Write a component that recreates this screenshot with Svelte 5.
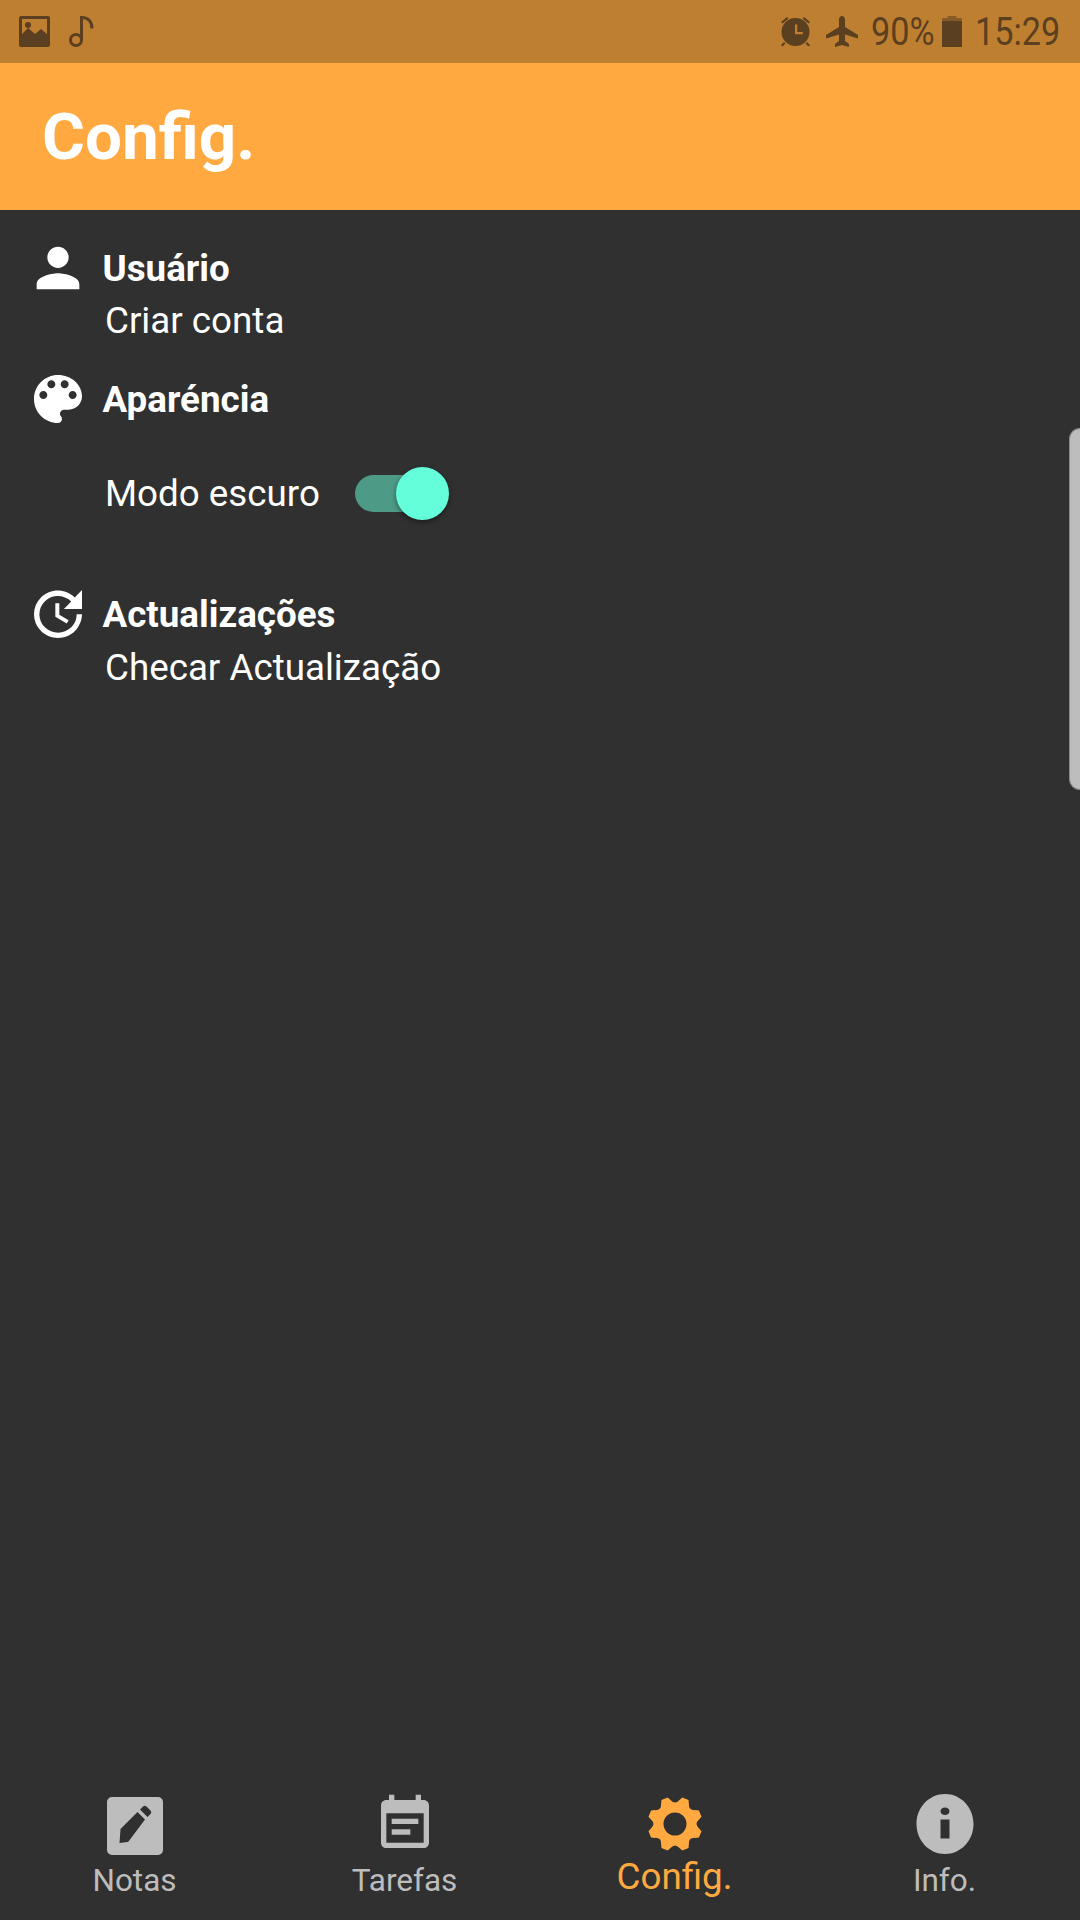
<script>
	// 8-toothed cog, outline computed so the scallops stay even
	function gearPath(cx, cy, outer, inner, hole) {
		let d = '';
		const pt = (r, deg) => {
			const a = (deg * Math.PI) / 180;
			return `${(cx + r * Math.cos(a)).toFixed(2)} ${(cy + r * Math.sin(a)).toFixed(2)}`;
		};
		for (let i = 0; i < 8; i++) {
			const mid = 22.5 + i * 45;
			d += `${i === 0 ? 'M' : 'L'}${pt(outer - 3, mid - 12)} L${pt(outer, mid - 7)} L${pt(outer, mid + 7)} L${pt(outer - 3, mid + 12)} `;
			d += `Q${pt(inner, mid + 22.5)} ${pt(outer - 3, mid + 33)} `;
		}
		d += `Z M${cx - hole} ${cy} a${hole} ${hole} 0 1 0 ${hole * 2} 0 a${hole} ${hole} 0 1 0 ${-hole * 2} 0 Z`;
		return d;
	}

	const gear = gearPath(32, 32, 27.5, 19, 11.5);
</script>

<div class="phone">
	<div class="status">
		<div class="status-left">
			<svg class="ic-image" viewBox="0 0 31 31">
				<path fill-rule="evenodd" d="M2 0h27a2 2 0 0 1 2 2v27a2 2 0 0 1-2 2H2a2 2 0 0 1-2-2V2a2 2 0 0 1 2-2zM3 3v15l6-6 7 6 6-5 6 5V3z" />
				<circle cx="9" cy="9" r="3" />
			</svg>
			<svg class="ic-note" viewBox="0 0 25 31" fill="none" stroke="currentColor" stroke-width="3">
				<circle cx="7" cy="24" r="5.5" />
				<path d="M12.5 24V1.5c6 0 10.500 3.500 10.500 11" />
			</svg>
		</div>
		<div class="status-right">
			<svg class="ic-alarm" viewBox="0 0 31 31">
				<circle cx="15.500" cy="16" r="14" />
				<path d="M1 6l6-5 1.500 1.500-6 5zM30 6l-6-5-1.500 1.500 6 5zM4 26l-3 3 1.500 1.500 3-3zM27 26l3 3-1.500 1.500-3-3z" />
				<path d="M15 8.500h2.300v7.500h5.500v2.300H15z" fill="#bf7f30" />
			</svg>
			<svg class="ic-plane" viewBox="0 0 32 31">
				<path d="M13 3.500C13 1.500 14.500 0 16 0s3 1.500 3 3.500V11l13 8v3.500l-13-4V25l4 3v3l-7-2-7 2v-3l4-3v-6.500L0 22.500V19l13-8z" />
			</svg>
			<span class="narrow pct">90%</span>
			<svg class="ic-battery" viewBox="0 0 20 31">
				<path d="M5.500 0h9v2h5.500v5H0V2h5.500z" opacity="0.55" />
				<path d="M0 5h20v26H0z" />
			</svg>
			<span class="narrow clock">15:29</span>
		</div>
	</div>

	<header class="appbar">
		<h1>Config.</h1>
	</header>

	<main class="content">
		<section class="group user">
			<div class="group-head">
				<svg class="head-icon" viewBox="0 0 24 24">
					<path d="M12 12c2.210 0 4-1.790 4-4s-1.790-4-4-4-4 1.790-4 4 1.790 4 4 4zm0 2c-2.670 0-8 1.340-8 4v2h16v-2c0-2.660-5.330-4-8-4z" />
				</svg>
				<h2>Usuário</h2>
			</div>
			<p class="item">Criar conta</p>
		</section>

		<section class="group look">
			<div class="group-head">
				<svg class="head-icon" viewBox="0 0 24 24">
					<path d="M12 3c-4.970 0-9 4.030-9 9s4.030 9 9 9c.83 0 1.500-.67 1.500-1.500 0-.39-.15-.74-.39-1.010-.23-.26-.38-.61-.38-.99 0-.83.67-1.500 1.500-1.500H16c2.760 0 5-2.240 5-5 0-4.420-4.030-8-9-8zm-5.500 9c-.83 0-1.500-.67-1.500-1.500S5.670 9 6.500 9 8 9.670 8 10.500 7.330 12 6.500 12zm3-4C8.670 8 8 7.330 8 6.500S8.670 5 9.500 5s1.500.67 1.500 1.500S10.330 8 9.500 8zm5 0c-.83 0-1.500-.67-1.500-1.500S13.670 5 14.500 5s1.500.67 1.500 1.500S15.330 8 14.500 8zm3 4c-.83 0-1.500-.67-1.500-1.500S16.670 9 17.500 9s1.500.67 1.500 1.500-.67 1.500-1.500 1.500z" />
				</svg>
				<h2>Aparéncia</h2>
			</div>
			<div class="item toggle-row">
				<span class="toggle-label">Modo escuro</span>
				<div class="toggle">
					<div class="thumb"></div>
				</div>
			</div>
		</section>

		<section class="group updates">
			<div class="group-head">
				<svg class="head-icon" viewBox="0 0 24 24">
					<path d="M21 10.120h-6.780l2.740-2.820c-2.730-2.700-7.150-2.800-9.880-.1-2.730 2.710-2.730 7.080 0 9.790s7.150 2.710 9.880 0C18.320 15.650 19 14.080 19 12.100h2c0 1.980-.88 4.550-2.640 6.290-3.510 3.480-9.210 3.480-12.720 0-3.500-3.470-3.530-9.110-.02-12.580s9.140-3.470 12.650 0L21 3v7.120zM12.500 8v4.250l3.500 2.080-.72 1.210L11 13V8h1.500z" />
				</svg>
				<h2>Actualizações</h2>
			</div>
			<p class="item">Checar Actualização</p>
		</section>
	</main>

	<nav class="tabs">
		<div class="tab">
			<svg class="tab-icon" viewBox="0 0 64 64">
				<path fill-rule="evenodd" d="M9 5h46a5 5 0 0 1 5 5v48a5 5 0 0 1-5 5H9a5 5 0 0 1-5-5V10a5 5 0 0 1 5-5zM47.500 18.500l-4-4a2.500 2.500 0 0 0-3.500 0l-3 3 7.500 7.500 3-3a2.500 2.500 0 0 0 0-3.500zM42 27.500L34.500 20 17.500 37 16.500 51l8-1 1-.5z" />
			</svg>
			<span>Notas</span>
		</div>
		<div class="tab">
			<svg class="tab-icon" viewBox="0 0 24 24">
				<path d="M17 10H7v2h10v-2zm2-7h-1V1h-2v2H8V1H6v2H5c-1.110 0-1.990.9-1.990 2L3 19c0 1.100.89 2 2 2h14c1.100 0 2-.9 2-2V5c0-1.100-.9-2-2-2zm0 16H5V8h14v11zm-5-5H7v2h7v-2z" />
			</svg>
			<span>Tarefas</span>
		</div>
		<div class="tab active">
			<svg class="tab-icon" viewBox="0 0 64 64">
				<path fill-rule="evenodd" d={gear} />
			</svg>
			<span>Config.</span>
		</div>
		<div class="tab">
			<svg class="tab-icon" viewBox="0 0 64 64">
				<path fill-rule="evenodd" d="M32 2c16 0 28.500 13.500 28.500 30S48 62 32 62 3.500 48.500 3.500 32 16 2 32 2zM32 15.500c-2.500 0-4.500 1.700-4.500 3.800s2 3.800 4.500 3.800 4.500-1.700 4.500-3.800-2-3.800-4.500-3.800zM27.500 27.500v19h9v-19z" />
			</svg>
			<span>Info.</span>
		</div>
	</nav>

	<div class="edge-handle"></div>
</div>

<style>
	:global(body) {
		margin: 0;
		background: #303030;
	}

	.phone {
		position: relative;
		display: flex;
		flex-direction: column;
		width: 1080px;
		height: 1920px;
		overflow: hidden;
		background: #303030;
		font-family: Roboto, 'Liberation Sans', sans-serif;
		color: #fff;
	}

	.status {
		display: flex;
		justify-content: space-between;
		align-items: center;
		height: 63px;
		flex: none;
		padding: 0 19px;
		box-sizing: border-box;
		background: #bf7f30;
		color: #5a3f20;
	}

	.status svg {
		display: block;
		fill: currentColor;
		height: 31px;
	}

	.status-left {
		display: flex;
		gap: 19px;
	}

	.status-right {
		display: flex;
		align-items: center;
		gap: 15px;
		margin-right: -1px;
	}

	.ic-image {
		width: 31px;
	}

	.ic-note {
		width: 25px;
		fill: none !important;
	}

	.ic-alarm {
		width: 31px;
	}

	.ic-plane {
		width: 32px;
	}

	.ic-battery {
		width: 20px;
		margin-left: -5px;
	}

	.narrow {
		display: inline-block;
		font-size: 38.5px;
		line-height: 63px;
		white-space: nowrap;
		transform: scaleX(0.89);
		transform-origin: left center;
	}

	.pct {
		width: 61px;
		margin-left: -2px;
	}

	.clock {
		width: 87px;
		margin-left: -2px;
	}

	.appbar {
		display: flex;
		align-items: center;
		flex: none;
		height: 147px;
		padding-left: 42px;
		background: #ffa940;
	}

	h1 {
		margin: 0;
		font-size: 65.6px;
		font-weight: 700;
	}

	.content {
		flex: 1;
		padding: 26px 26px 0;
	}

	.group-head {
		display: flex;
		align-items: center;
		gap: 12.5px;
		height: 64px;
	}

	.head-icon {
		width: 64px;
		height: 64px;
		flex: none;
		fill: #fff;
	}

	h2 {
		margin: 0;
		font-size: 36.75px;
		font-weight: 700;
	}

	.item {
		margin: 0;
		padding-left: 79px;
		font-size: 36.75px;
		line-height: 40px;
	}

	.user .item {
		margin-top: 1px;
	}

	.look {
		margin-top: 26px;
	}

	.toggle-row {
		display: flex;
		align-items: center;
		gap: 35px;
		height: 60px;
		margin-top: 32px;
	}

	.toggle-label {
		margin-top: 2px;
	}

	.toggle {
		position: relative;
		width: 86px;
		height: 37px;
		border-radius: 19px;
		background: #4d9a87;
	}

	.thumb {
		position: absolute;
		top: -8px;
		right: -8px;
		width: 53px;
		height: 53px;
		border-radius: 50%;
		background: #64ffda;
		box-shadow: 0 2px 5px rgba(0, 0, 0, 0.45);
	}

	.updates {
		margin-top: 59px;
	}

	.updates .item {
		margin-top: 2px;
	}

	.tabs {
		display: grid;
		grid-template-columns: repeat(4, 1fr);
		flex: none;
		height: 128px;
		color: #bdbdbd;
	}

	.tab {
		display: flex;
		flex-direction: column;
		align-items: center;
		gap: 7px;
		font-size: 31.5px;
		line-height: 36px;
	}

	.tab span {
		margin-left: -1px;
	}

	.tab-icon {
		display: block;
		width: 64px;
		height: 64px;
		fill: currentColor;
	}

	.tab.active {
		gap: 0;
		color: #ffa940;
		font-size: 36.75px;
		line-height: 42px;
	}

	.edge-handle {
		position: absolute;
		top: 428px;
		right: 0;
		width: 11px;
		height: 362px;
		box-sizing: border-box;
		border: 1px solid #8a8a8a;
		border-right: 0;
		border-radius: 12px 0 0 12px;
		background: #bdbdbd;
	}
</style>
